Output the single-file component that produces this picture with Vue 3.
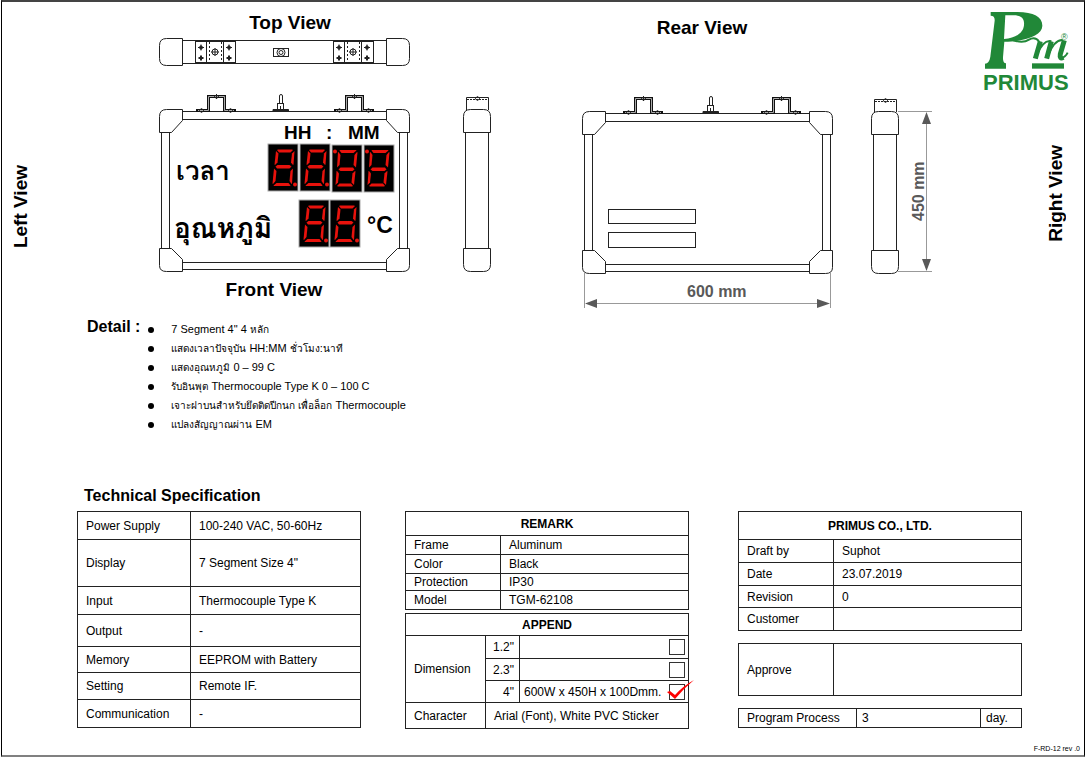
<script setup>
const details = [
  '7 Segment 4" 4 หลัก',
  'แสดงเวลาปัจจุบัน HH:MM ชั่วโมง:นาที',
  'แสดงอุณหภูมิ 0 – 99 C',
  'รับอินพุต Thermocouple Type K 0 – 100 C',
  'เจาะฝาบนสำหรับยึดติดปีกนก เพื่อล็อก Thermocouple',
  'แปลงสัญญาณผ่าน EM',
]

// Thai runs are set one size smaller than the Latin text around them.
const runs = (text) =>
  text
    .split(/([\u0E00-\u0E7F]+)/)
    .filter(Boolean)
    .map((part) => ({ part, thai: /[\u0E00-\u0E7F]/.test(part) }))

const specs = [
  { label: 'Power Supply', value: '100-240 VAC, 50-60Hz', size: 'h28' },
  { label: 'Display', value: '7 Segment Size 4"', size: 'h47' },
  { label: 'Input', value: 'Thermocouple Type K', size: 'h28' },
  { label: 'Output', value: '-', size: 'h32' },
  { label: 'Memory', value: 'EEPROM with Battery', size: 'h26' },
  { label: 'Setting', value: 'Remote IF.', size: 'h27' },
  { label: 'Communication', value: '-', size: 'h28' },
]

const remarks = [
  { label: 'Frame', value: 'Aluminum', size: 'h19' },
  { label: 'Color', value: 'Black', size: 'h19' },
  { label: 'Protection', value: 'IP30', size: 'h17' },
  { label: 'Model', value: 'TGM-62108', size: 'h19' },
]

const company = [
  { label: 'Draft by', value: 'Suphot', size: 'h23' },
  { label: 'Date', value: '23.07.2019', size: 'h23' },
  { label: 'Revision', value: '0', size: 'h22' },
  { label: 'Customer', value: '', size: 'h23' },
]

const digits = [
  { x: 268, y: 144 },
  { x: 300, y: 144 },
  { x: 332, y: 145, flip: true },
  { x: 364, y: 145, flip: true },
  { x: 299, y: 200 },
  { x: 330, y: 200 },
]

const digitPlace = (d) =>
  `translate(${d.x} ${d.y})` + (d.flip ? ' rotate(180 15 23.5)' : '')
</script>

<template>
  <main class="sheet">
    <section class="drawings">
      <div class="label-left">
        <h2 class="view vertical">Left View</h2>
      </div>

      <div class="front">
        <h2 class="view top-title">Top View</h2>
        <svg class="art" viewBox="157 36 254 238" role="img" aria-label="Top and front drawings">
          <defs>
            <g id="plate">
              <rect x="195.5" y="41.5" width="40" height="21" />
              <path d="M206.5 41.5V62.5M223.5 41.5V62.5" />
              <path d="M209.5 42V62M221.5 42V62" stroke-dasharray="2 2" />
              <circle cx="215" cy="52" r="3" />
              <path d="M211 52H219M215 48V56" />
              <path d="M198 47.5H204M201 44.5V50.5M198 58H204M201 55V61M226 47.5H232M229 44.5V50.5M226 58H232M229 55V61" />
              <path class="solid" d="M201 45.5L203 47.5L201 49.5L199 47.5ZM201 56L203 58L201 60L199 58ZM229 45.5L231 47.5L229 49.5L227 47.5ZM229 56L231 58L229 60L227 58Z" />
            </g>
            <g id="bracket">
              <path class="heavy" d="M196 110.5H208.5V96.500H224.5V110.5H236" />
              <path class="gap" d="M198 110.5H208.5V96.500H224.5V110.5H234" />
              <path d="M199 110.5L201.5 108.5L204 110.5L201.5 112.500ZM228 110.5L230.5 108.5L233 110.5L230.5 112.500ZM214 96.500L216.500 95L219 96.500L216.500 98.500Z" />
              <path d="M216.500 94V99" />
            </g>
            <g id="hook">
              <path class="solid" d="M273 111.500V109.500H288.500V111.500Z" />
              <rect x="277.500" y="103.500" width="6" height="6" />
              <path d="M279.500 103.500V96Q279.500 94.500 281 94.500T282.500 96V103.500" />
              <path d="M280.500 106V109" />
            </g>
            <g id="frame">
              <path d="M182.500 111.500H386.500M182.500 119.500H386.500M182.500 262.500H386.500M182.500 269.500H386.500" />
              <path d="M161.500 132.500V248.500M169.500 132.500V248.500M399.500 132.500V248.500M407.500 132.500V248.500" />
              <path d="M159.500 132.500V116.500Q159.500 109.500 166.500 109.500H182.500V120.500L171.500 132.500Z" />
              <path d="M409.500 132.500V116.500Q409.500 109.500 402.500 109.500H386.500V120.500L397.500 132.500Z" />
              <path d="M159.500 248.500V265.500Q159.500 271.500 166.500 271.500H182.500V259.500L171.500 248.500Z" />
              <path d="M409.500 248.500V265.500Q409.500 271.500 402.500 271.500H386.500V259.500L397.500 248.500Z" />
            </g>
            <g id="profile">
              <path d="M466.500 110V97.500H488.500V110" />
              <path d="M467 99.500H488" stroke-dasharray="2 1" />
              <path d="M475 98.500L477.500 96.500L480 98.500L477.500 100.500Z" />
              <path d="M463.500 132.500V116.500Q463.500 109.500 470.500 109.500H483.500Q490.500 109.500 490.500 116.500V132.500Z" />
              <path d="M465.500 132.500V248.500M488.500 132.500V248.500" />
              <path d="M463.500 248.500V264.500Q463.500 271.500 470.500 271.500H483.500Q490.500 271.500 490.500 264.500V248.500Z" />
            </g>
            <g id="digit">
              <path d="M9 6L10 5.500H24L25 6L22.500 8.500H11Z" />
              <path d="M8 7L10.500 9.500L9.500 18.500L7 21L6.500 20.500Z" />
              <path d="M26.500 7L24 9.500L23 18.500L25 21L25.500 20.500Z" />
              <path d="M7.500 22.500L9.500 21H21.500L23.500 22.500L21.500 24.500H9Z" />
              <path d="M6 24.500L8.500 27L7.500 37L5 40L4.500 39.500Z" />
              <path d="M25 24.500L22.500 27L21.500 37L23.500 40L24 39.500Z" />
              <path d="M5.500 41.500L8.500 39H20.500L22.500 41.500L22 42H6Z" />
              <circle cx="27" cy="40.500" r="2" />
            </g>
          </defs>

          <path class="line" d="M182.500 40.500H386.500M182.500 63.500H386.500" />
          <path class="line" d="M182.500 38.500V65.500H166.500Q159.500 65.500 159.500 58.500V45.500Q159.500 38.500 166.500 38.500Z" />
          <path class="line" d="M386.500 38.500V65.500H402.500Q409.500 65.500 409.500 58.500V45.500Q409.500 38.500 402.500 38.500Z" />
          <use class="line" href="#plate" />
          <use class="line" href="#plate" x="138" />
          <rect class="line" x="273.500" y="48.500" width="15" height="8" />
          <circle class="line" cx="281" cy="52.500" r="4" />
          <circle class="line" cx="281" cy="52.500" r="2" />

          <use class="line" href="#frame" />
          <use class="line" href="#bracket" />
          <use class="line" href="#bracket" x="138" />
          <use class="line" href="#hook" />

          <text class="bold t19" x="284" y="139">HH</text>
          <text class="bold t19" x="326" y="139">:</text>
          <text class="bold t19" x="348" y="139">MM</text>
          <text class="thai t26" x="176" y="180">เวลา</text>
          <text class="thai t28" x="174" y="238">อุณหภูมิ</text>
          <text class="bold t23" x="367" y="233">°C</text>

          <g v-for="(d, i) in digits" :key="i" :transform="digitPlace(d)">
            <rect class="tile" width="30" height="47" />
            <use class="led" href="#digit" />
          </g>
        </svg>
        <h2 class="view front-title">Front View</h2>
      </div>

      <svg class="art side" viewBox="461 2 32 308" role="img" aria-label="Left side drawing">
        <use class="line" href="#profile" />
      </svg>

      <div class="rear">
        <h2 class="view rear-title">Rear View</h2>
        <svg class="art" viewBox="580 90 254 220" role="img" aria-label="Rear drawing, 600 mm wide">
          <use class="line" href="#frame" x="423" y="2" />
          <use class="line" href="#bracket" x="427" y="2" />
          <use class="line" href="#bracket" x="565" y="2" />
          <use class="line" href="#hook" x="430" y="2" />
          <rect class="line" x="608.500" y="209.500" width="87" height="14" />
          <rect class="line" x="608.500" y="232.500" width="87" height="15" />
          <path class="dim" d="M584.500 273V308M830.500 273V308M590 303.500H825" />
          <path class="arrow" d="M585 303.500L597 299V308ZM830 303.500L817 299V308Z" />
          <text class="bold t16 grey" x="687" y="297">600 mm</text>
        </svg>
      </div>

      <svg class="art right" viewBox="868 2 68 308" role="img" aria-label="Right side drawing, 450 mm high">
        <use class="line" href="#profile" x="408" y="2" />
        <path class="dim" d="M898 111.500H932M898 271.500H932M926.500 118V266" />
        <path class="arrow" d="M926.500 112L922 124H931ZM926.500 271L922 259H931Z" />
        <text class="bold t16 grey" transform="translate(924 221) rotate(-90)">450 mm</text>
      </svg>

      <div class="brand">
        <svg class="logo" viewBox="983 8 88 88" role="img" aria-label="Primus">
          <g transform="translate(960 0) scale(0.3333)">
            <path fill-rule="evenodd" d="M92 36H172C222 36 248 52 247 78C246 106 200 124 133 125L129 172Q128 190 138 190V206H75V191Q88 190 91 170L104 62Q105 47 92 47ZM136 46L132 117C168 115 190 98 192 76C194 54 184 46 160 46Z" />
            <path class="script" d="M241 124L226 176M274 124L260 176M313 121L301 162Q298 178 310 172" />
            <path class="hair" d="M160 121Q190 130 207 119Q226 108 238 126M230 166Q250 118 274 124M264 166Q284 118 308 120M304 174Q316 172 323 158" />
            <rect x="216" y="190" width="96" height="16" />
          </g>
          <text class="reg" x="1061" y="40">®</text>
          <text class="primus" x="983" y="90">PRIMUS</text>
        </svg>
        <h2 class="view vertical">Right View</h2>
      </div>
    </section>

    <section class="details">
      <h3>Detail :</h3>
      <ul>
        <li v-for="d in details" :key="d">
          <span><span v-for="(r, i) in runs(d)" :key="i" :class="{ small: r.thai }">{{ r.part }}</span></span>
        </li>
      </ul>
    </section>

    <h3 class="spec-title">Technical Specification</h3>
    <section class="tables">
      <table class="specs">
        <colgroup><col class="c113" /><col /></colgroup>
        <tbody>
          <tr v-for="r in specs" :key="r.label" :class="r.size">
            <th scope="row">{{ r.label }}</th>
            <td>{{ r.value }}</td>
          </tr>
        </tbody>
      </table>

      <div class="stack middle">
        <table>
          <colgroup><col class="c95" /><col /></colgroup>
          <thead>
            <tr class="h24"><th class="head" colspan="2">REMARK</th></tr>
          </thead>
          <tbody>
            <tr v-for="r in remarks" :key="r.label" :class="r.size">
              <th scope="row">{{ r.label }}</th>
              <td>{{ r.value }}</td>
            </tr>
          </tbody>
        </table>
        <table class="append">
          <colgroup><col class="c80" /><col class="c34" /><col /></colgroup>
          <thead>
            <tr class="h22"><th class="head" colspan="3">APPEND</th></tr>
          </thead>
          <tbody>
            <tr class="h23">
              <th scope="row" rowspan="3">Dimension</th>
              <td class="size"><label for="size-12">1.2"</label></td>
              <td class="choice"><div><input id="size-12" type="checkbox" /></div></td>
            </tr>
            <tr class="h22">
              <td class="size"><label for="size-23">2.3"</label></td>
              <td class="choice"><div><input id="size-23" type="checkbox" /></div></td>
            </tr>
            <tr class="h22">
              <td class="size"><label for="size-4">4"</label></td>
              <td class="choice">
                <div>
                  <span>600W x 450H x 100Dmm.</span>
                  <input id="size-4" type="checkbox" checked />
                  <svg class="tick" viewBox="0 0 30 22" aria-hidden="true">
                    <path d="M1 13L4 12L9 16Q17 7 28 1Q17 10 9 20Z" />
                  </svg>
                </div>
              </td>
            </tr>
            <tr class="h26">
              <th scope="row">Character</th>
              <td colspan="2">Arial (Font), White PVC Sticker</td>
            </tr>
          </tbody>
        </table>
      </div>

      <div class="stack company">
        <table>
          <colgroup><col class="c95" /><col /></colgroup>
          <thead>
            <tr class="h28"><th class="head" colspan="2">PRIMUS CO., LTD.</th></tr>
          </thead>
          <tbody>
            <tr v-for="r in company" :key="r.label" :class="r.size">
              <th scope="row">{{ r.label }}</th>
              <td>{{ r.value }}</td>
            </tr>
          </tbody>
        </table>
        <table>
          <colgroup><col class="c95" /><col /></colgroup>
          <tbody>
            <tr class="h52">
              <th scope="row">Approve</th>
              <td></td>
            </tr>
          </tbody>
        </table>
        <table class="process">
          <colgroup><col class="c118" /><col /><col class="c41" /></colgroup>
          <tbody>
            <tr class="h19">
              <th scope="row">Program Process</th>
              <td>3</td>
              <td>day.</td>
            </tr>
          </tbody>
        </table>
      </div>
    </section>

    <footer>F-RD-12 rev .0</footer>
  </main>
</template>

<style>
body {
  background: #fff;
}
</style>

<style scoped>
.sheet {
  box-sizing: border-box;
  margin: 0 1px;
  border: 1px solid #000;
  border-top: 2px solid #444;
  border-bottom: 2px solid #808080;
  font-family: "Liberation Sans", Arial, sans-serif;
  font-size: 12px;
  color: #000;
}
h2, h3 {
  margin: 0;
  font-weight: bold;
}
.drawings {
  display: grid;
  grid-template-columns:
    minmax(0, 155fr) minmax(0, 254fr) minmax(0, 50fr) minmax(0, 32fr) minmax(0, 87fr)
    minmax(0, 254fr) minmax(0, 34fr) minmax(0, 68fr) minmax(0, 148fr);
  align-items: start;
}
.label-left { grid-column: 1; }
.front { grid-column: 2; }
.side { grid-column: 4; }
.rear { grid-column: 6; }
.right { grid-column: 8; }
.brand { grid-column: 9; }
.art {
  display: block;
  width: 100%;
  height: auto;
}
.view {
  font-size: 19px;
  line-height: 22px;
  text-align: center;
}
.vertical {
  writing-mode: vertical-rl;
  transform: rotate(180deg);
}
.label-left .vertical {
  margin: 163px 0 0 8px;
}
.top-title {
  padding: 10px 0 2px 12px;
}
.front-title {
  padding: 5px 20px 9px 0;
}
.rear-title {
  padding: 15px 10px 51px 0;
}
.line {
  fill: none;
  stroke: #222;
  stroke-width: 1px;
}
.heavy {
  stroke: #111;
  stroke-width: 3px;
}
.gap {
  stroke: #aaa;
  stroke-width: 1px;
}
.solid {
  fill: #222;
}
.dim {
  fill: none;
  stroke: #999;
}
.arrow {
  fill: #595959;
}
.tile {
  fill: #000;
  stroke: #aaa;
}
.led {
  fill: #e8120c;
}
.bold {
  font-weight: bold;
}
.t16 { font-size: 16px; }
.t19 { font-size: 19px; }
.t23 { font-size: 23px; }
.t26 { font-size: 26px; }
.t28 { font-size: 28px; }
.grey { fill: #595959; }
.thai {
  font-family: "Loma", "Norasi", "Noto Serif Thai", "Liberation Serif", serif;
  font-weight: bold;
}
.brand {
  display: flex;
  flex-direction: column;
  align-items: flex-end;
  padding: 6px 13px 0 0;
}
.logo {
  width: 88px;
  height: 88px;
  fill: #218838;
}
.script {
  fill: none;
  stroke: #218838;
  stroke-width: 15px;
}
.hair {
  fill: none;
  stroke: #218838;
  stroke-width: 6px;
}
.reg {
  font-size: 9px;
}
.primus {
  font-size: 22px;
  font-weight: bold;
}
.brand .vertical {
  margin: 49px 4px 0 0;
}
.details {
  display: flex;
  padding: 10px 0 0 85px;
}
.details h3 {
  font-size: 16px;
  line-height: 14px;
}
.details ul {
  margin: 0;
  padding: 0 0 0 8px;
  list-style: none;
}
.details li {
  display: flex;
  align-items: center;
  height: 19px;
  font-size: 11px;
  line-height: 14px;
  white-space: pre;
}
.details .small {
  font-size: 10px;
}
.details li::before {
  content: "";
  width: 6px;
  height: 6px;
  margin-right: 17px;
  border-radius: 3px;
  background: #000;
}
.spec-title {
  padding: 52px 0 5px 82px;
  font-size: 16px;
  line-height: 20px;
}
.tables {
  display: grid;
  grid-template-columns:
    minmax(0, 284fr) minmax(0, 44fr) minmax(0, 284fr) minmax(0, 49fr) minmax(0, 284fr);
  align-items: start;
  padding: 0 62px 0 75px;
}
.stack {
  display: flex;
  flex-direction: column;
}
.middle {
  grid-column: 3;
  gap: 3px;
}
.company {
  grid-column: 5;
  gap: 12px;
}
table {
  width: 100%;
  table-layout: fixed;
  border-collapse: collapse;
}
th, td {
  box-sizing: border-box;
  padding: 0 0 0 8px;
  border: 1px solid #222;
  font-weight: normal;
  line-height: 14px;
  text-align: left;
  white-space: nowrap;
}
.head {
  padding: 0;
  font-weight: bold;
  text-align: center;
}
.c113 { width: 113px; }
.c95 { width: 95px; }
.c80 { width: 80px; }
.c34 { width: 34px; }
.c118 { width: 118px; }
.c41 { width: 41px; }
.h17 { height: 17px; }
.h19 { height: 19px; }
.h22 { height: 22px; }
.h23 { height: 23px; }
.h24 { height: 24px; }
.h26 { height: 26px; }
.h27 { height: 27px; }
.h28 { height: 28px; }
.h32 { height: 32px; }
.h47 { height: 47px; }
.h52 { height: 52px; }
.append .size {
  padding: 0 5px 0 0;
  text-align: right;
}
.append .choice {
  padding: 0 3px 0 4px;
}
.choice div {
  position: relative;
  display: flex;
  align-items: center;
  justify-content: flex-end;
}
.choice span {
  flex: 1;
}
.choice input {
  appearance: none;
  width: 16px;
  height: 16px;
  margin: 0;
  border: 1px solid #333;
  background: #fff;
}
.tick {
  position: absolute;
  right: -11px;
  bottom: -1px;
  width: 30px;
  height: 22px;
  fill: #f00;
}
.process td,
.process th {
  padding-left: 5px;
}
.process th {
  padding-left: 8px;
}
footer {
  padding: 15px 4px 2px 0;
  font-size: 7px;
  line-height: 9px;
  text-align: right;
}
</style>
